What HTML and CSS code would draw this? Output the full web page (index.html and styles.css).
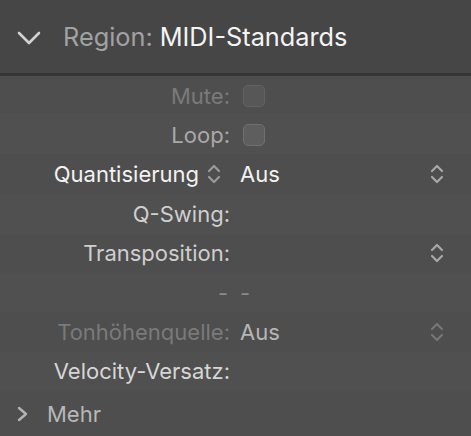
FILE: index.html
```html
<!DOCTYPE html>
<html>
<head>
<meta charset="utf-8">
<link rel="stylesheet" href="styles.css">
</head>
<body>
<div class="panel">
  <div class="header">
    <svg class="chev-down" width="24" height="16" viewBox="0 0 24 16"><path d="M2 3 L12 13 L22 3" fill="none" stroke="#d2d2d2" stroke-width="2.6" stroke-linecap="round" stroke-linejoin="round"/></svg>
    <span class="h-label">Region:</span><span class="h-name">MIDI-Standards</span>
  </div>
  <div class="rows">
    <div class="row alt">
      <div class="label dim">Mute:</div>
      <div class="value"><span class="check dimcheck"></span></div>
      <div class="step"></div>
    </div>
    <div class="row">
      <div class="label mid">Loop:</div>
      <div class="value"><span class="check"></span></div>
      <div class="step"></div>
    </div>
    <div class="row alt">
      <div class="label bright">Quantisierung
        <svg class="updown small" width="14" height="24" viewBox="0 0 14 24"><path d="M2 9 L7 4 L12 9 M2 15 L7 20 L12 15" fill="none" stroke="#9a9a9a" stroke-width="2.2" stroke-linecap="round" stroke-linejoin="round"/></svg>
      </div>
      <div class="value bright">Aus</div>
      <div class="step"><svg class="updown" width="14" height="24" viewBox="0 0 14 24"><path d="M2 9 L7 4 L12 9 M2 15 L7 20 L12 15" fill="none" stroke="#a8a8a8" stroke-width="2.2" stroke-linecap="round" stroke-linejoin="round"/></svg></div>
    </div>
    <div class="row">
      <div class="label light">Q-Swing:</div>
      <div class="value"></div>
      <div class="step"></div>
    </div>
    <div class="row alt">
      <div class="label light">Transposition:</div>
      <div class="value"></div>
      <div class="step"><svg class="updown" width="14" height="24" viewBox="0 0 14 24"><path d="M2 9 L7 4 L12 9 M2 15 L7 20 L12 15" fill="none" stroke="#a8a8a8" stroke-width="2.2" stroke-linecap="round" stroke-linejoin="round"/></svg></div>
    </div>
    <div class="row">
      <div class="label dash">-</div>
      <div class="value dash">-</div>
      <div class="step"></div>
    </div>
    <div class="row alt">
      <div class="label dim">Tonhöhenquelle:</div>
      <div class="value soft">Aus</div>
      <div class="step"><svg class="updown" width="14" height="24" viewBox="0 0 14 24"><path d="M2 9 L7 4 L12 9 M2 15 L7 20 L12 15" fill="none" stroke="#767676" stroke-width="2.2" stroke-linecap="round" stroke-linejoin="round"/></svg></div>
    </div>
    <div class="row">
      <div class="label light2">Velocity-Versatz:</div>
      <div class="value"></div>
      <div class="step"></div>
    </div>
    <div class="row alt more">
      <svg class="chev-right" width="14" height="18" viewBox="0 0 14 18"><path d="M3 3 L10 9 L3 15" fill="none" stroke="#b4b4b4" stroke-width="2.4" stroke-linecap="round" stroke-linejoin="round"/></svg>
      <span class="more-text">Mehr</span>
    </div>
  </div>
</div>
</body>
</html>
```

FILE: styles.css
```css
html, body {
  margin: 0;
  padding: 0;
  background: #4f4f4f;
}
body {
  font-family: Inter, "Liberation Sans", sans-serif;
  width: 471px;
  height: 436px;
  overflow: hidden;
}
.panel {
  display: flex;
  flex-direction: column;
  height: 436px;
}
.header {
  height: 76px;
  background: #464646;
  border-bottom: 3px solid #363636;
  display: flex;
  align-items: center;
  box-sizing: border-box;
  padding-left: 17px;
  font-size: 25.3px;
}
.chev-down {
  margin-right: 22px;
  margin-top: 2px;
}
.h-label {
  color: #a2a2a2;
  margin-right: 7px;
}
.h-name {
  color: #f4f4f4;
}
.rows {
  flex: 1;
  display: flex;
  flex-direction: column;
}
.row {
  height: 39.4px;
  display: grid;
  grid-template-columns: 230px 1fr 40px;
  column-gap: 10px;
  align-items: center;
  font-size: 22px;
  background: #505050;
  padding-right: 14px;
}
.row.alt {
  background: #4e4e4e;
}
.label {
  text-align: right;
  display: flex;
  justify-content: flex-end;
  align-items: center;
}
.value {
  display: flex;
  align-items: center;
}
.step {
  display: flex;
  justify-content: center;
  align-items: center;
}
.dim { color: #7a7a7a; }
.mid { color: #a9a9a9; }
.bright { color: #f2f2f2; }
.light { color: #cfcfcf; }
.light2 { color: #d6d6d6; }
.soft { color: #b6b6b6; }
.dash { color: #8a8a8a; }
.label.dash { padding-right: 2px; }
.updown.small {
  margin-left: 8px;
  margin-right: 9px;
}
.check {
  display: inline-block;
  width: 22px;
  height: 22px;
  border-radius: 5px;
  background: #5e5e5e;
  border: 1px solid #707070;
  box-sizing: border-box;
  margin-left: 3px;
}
.check.dimcheck {
  background: #575757;
  border-color: #626262;
}
.more {
  display: flex;
  align-items: center;
  flex: 1;
  padding-left: 16px;
}
.chev-right {
  margin-right: 7px;
}
.more-text {
  color: #b8b8b8;
}
```
